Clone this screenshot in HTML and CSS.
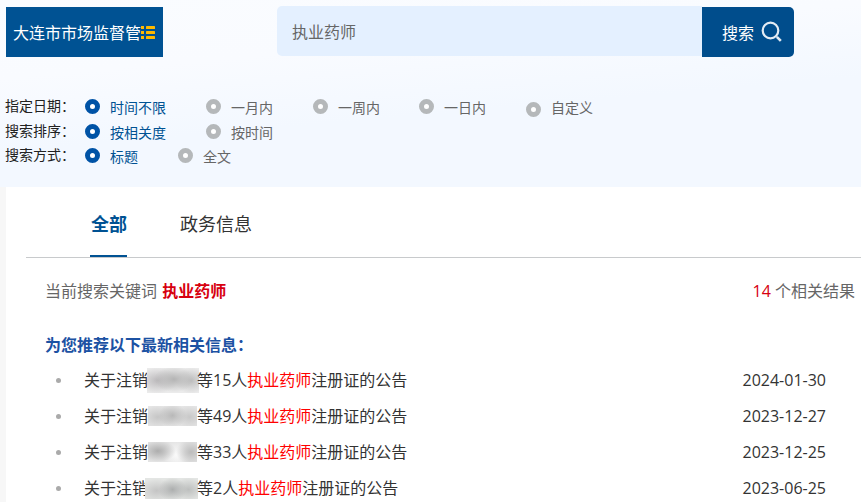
FILE: index.html
```html
<!DOCTYPE html>
<html lang="zh-CN">
<head>
    <meta charset="UTF-8" />
    <meta name="viewport" content="width=device-width, initial-scale=1.0" />
    <title>搜索</title>
    <link rel="stylesheet" href="styles.css">
</head>
<body>
    <div class="top">
        <div class="search-bar">
            <div class="site-select">
                <span>大连市市场监督管</span>
                <svg class="list-icon" width="14" height="13" viewBox="0 0 14 13" fill="#fdb900">
                    <path d="M0 0h3v3H0zM0 5h3v3H0zM0 10h3v3H0z" />
                    <rect x="5" y="0" width="9" height="3" rx=".6" />
                    <rect x="5" y="5" width="9" height="3" rx=".6" />
                    <rect x="5" y="10" width="9" height="3" rx=".6" />
                </svg>
            </div>
            <form class="search-form">
                <input type="text" class="search-input" value="执业药师" />
                <button type="button" class="search-btn">
                    <span>搜索</span>
                    <svg width="22" height="22" viewBox="0 0 22 22" fill="none" stroke="#e3ebf3">
                        <circle cx="9.5" cy="9.5" r="7.8" stroke-width="2.2" />
                        <path d="M15.8 15.8l4 4" stroke-width="2.6" />
                    </svg>
                </button>
            </form>
        </div>

        <!-- Filters -->
        <div class="filters">
            <div class="filter-row">
                <span class="filter-label">指定日期：</span>
                <a class="option on"><i class="radio"></i><span>时间不限</span></a>
                <a class="option"><i class="radio"></i><span>一月内</span></a>
                <a class="option"><i class="radio"></i><span>一周内</span></a>
                <a class="option day"><i class="radio"></i><span>一日内</span></a>
                <a class="option custom"><i class="radio"></i><span>自定义</span></a>
            </div>
            <div class="filter-row sort">
                <span class="filter-label">搜索排序：</span>
                <a class="option on"><i class="radio"></i><span>按相关度</span></a>
                <a class="option"><i class="radio"></i><span>按时间</span></a>
            </div>
            <div class="filter-row">
                <span class="filter-label">搜索方式：</span>
                <a class="option on"><i class="radio"></i><span>标题</span></a>
                <a class="option"><i class="radio"></i><span>全文</span></a>
            </div>
        </div>
    </div>

    <!-- Results -->
    <div class="content">
        <div class="tabs">
            <a class="tab active">全部</a>
            <a class="tab">政务信息</a>
        </div>
        <div class="summary">
            <div>当前搜索关键词 <b>执业药师</b></div>
            <div><em>14</em> 个相关结果</div>
        </div>
        <h3 class="recommend">为您推荐以下最新相关信息：</h3>
        <ul class="list">
            <li><a>关于注销<i class="mask mask-a"></i>等15人<em>执业药师</em>注册证的公告</a><span class="date">2024-01-30</span></li>
            <li><a>关于注销<i class="mask mask-b"></i>等49人<em>执业药师</em>注册证的公告</a><span class="date">2023-12-27</span></li>
            <li><a>关于注销<i class="mask mask-c"></i>等33人<em>执业药师</em>注册证的公告</a><span class="date">2023-12-25</span></li>
            <li><a>关于注销<i class="mask mask-d"></i>等2人<em>执业药师</em>注册证的公告</a><span class="date">2023-06-25</span></li>
        </ul>
    </div>
</body>
</html>
```
FILE: styles.css
```css
:root {
    --blue: #005293;
    --blue-dark: #004d8c;
    --radio: #0053a6;
    --grey: #666;
    --text: #333;
}

* {
    box-sizing: border-box;
}

body {
    margin: 0;
    height: 502px;
    overflow: hidden;
    font-family: "Open Sans", "Noto Sans CJK SC", sans-serif;
    font-size: 16px;
    color: var(--text);
    background-color: #f7f7f7;
}

i,
em {
    font-style: normal;
}

.top {
    height: 187px;
    padding: 6px 0 0 6px;
    background: linear-gradient(175deg, #fafcff 0%, #f9fbff 30%, #f3f8ff 58%, #f3f8ff 100%);
}

.search-bar {
    display: flex;
    height: 51px;
}

.site-select {
    display: flex;
    align-items: center;
    width: 157px;
    height: 50px;
    margin-top: 1px;
    padding-left: 7px;
    color: #fff;
    background-color: var(--blue);
    white-space: nowrap;
}

.list-icon {
    flex: none;
    margin-top: 1px;
}

.search-form {
    display: flex;
    margin: 0 0 0 114px;
}

.search-input {
    width: 425px;
    height: 50px;
    padding: 0 15px;
    border: none;
    border-radius: 5px 0 0 5px;
    outline: none;
    font: inherit;
    color: var(--grey);
    background-color: #e4f0ff;
}

.search-btn {
    display: flex;
    align-items: center;
    gap: 7px;
    width: 92px;
    height: 50px;
    margin-top: 1px;
    padding: 0 0 0 20px;
    border: none;
    border-radius: 0 5px 5px 0;
    font: inherit;
    color: #fff;
    background-color: var(--blue-dark);
}

.filters {
    margin-top: 37px;
    font-size: 14px;
}

.filter-row {
    display: flex;
    align-items: center;
    height: 24.5px;
    line-height: 20px;
}

.filter-label {
    width: 80px;
    margin-left: -1px;
    color: #222;
    white-space: nowrap;
}

.option {
    display: flex;
    align-items: center;
    gap: 10px;
    margin-right: 40px;
    color: var(--grey);
}

.option span {
    padding-top: 3px;
    margin-bottom: -1px;
}

.option.on {
    color: var(--blue);
}

.option.day {
    margin-left: -1px;
}

.radio {
    width: 15px;
    height: 15px;
    border: 5px solid #b5b8ba;
    border-radius: 50%;
    background-color: #fff;
}

.on .radio {
    border-color: var(--radio);
}

.sort .radio {
    margin-top: 1px;
}

.custom .radio {
    margin-top: 6px;
}

.content {
    height: 315px;
    margin-left: 6px;
    background-color: #fff;
}

.tabs {
    display: flex;
    gap: 53px;
    height: 71px;
    margin-left: 20px;
    padding-left: 64px;
    border-bottom: 1px solid #c8cacc;
    font-size: 18px;
    line-height: 74px;
}

.tab {
    height: 70px;
}

.tab.active {
    width: 37px;
    padding-left: 1px;
    border-bottom: 2px solid var(--blue);
    font-weight: bold;
    color: var(--blue);
    white-space: nowrap;
}

.summary {
    display: flex;
    justify-content: space-between;
    padding: 20px 6px 0 39px;
    line-height: 26px;
    color: var(--grey);
}

.summary b {
    margin-left: 1px;
    color: #d7000f;
}

.summary em {
    color: #d7000f;
}

.recommend {
    margin: 28px 0 4px 39px;
    font-size: 16px;
    line-height: 26px;
    color: #1c52a3;
}

.list {
    margin: 0;
    padding: 0 35px 0 50px;
    list-style: none;
}

.list li {
    display: flex;
    align-items: center;
    height: 36px;
    line-height: 36px;
}

.list li::before {
    content: "";
    width: 5px;
    height: 5px;
    margin-right: 23px;
    border-radius: 50%;
    background-color: #aaa;
}

.list a {
    display: flex;
    align-items: center;
}

.list em {
    color: #f00;
}

.date {
    margin-left: auto;
}

/* blurred-out names */
.mask {
    width: 49px;
    height: 20px;
    background:
        radial-gradient(ellipse 14px 12px at 50% 48%, #b8b8b8, transparent),
        radial-gradient(ellipse 18px 12px at 20% 55%, #c6c6c6, transparent),
        radial-gradient(ellipse 16px 12px at 85% 55%, #c8c8c8, transparent),
        #e6e6e6;
}

.mask-a {
    width: 52px;
    height: 25px;
    margin: 0 -2px 0 -1px;
    background:
        radial-gradient(ellipse 20px 13px at 52% 45%, #b4b4b4, transparent),
        radial-gradient(ellipse 20px 13px at 20% 50%, #bcbabc, transparent),
        radial-gradient(ellipse 16px 13px at 85% 50%, #bebebe, transparent),
        #ebebeb;
}

.mask-c {
    background:
        radial-gradient(ellipse 18px 11px at 20% 45%, #adadad, transparent),
        radial-gradient(ellipse 15px 13px at 88% 50%, #bcbcbc, transparent),
        radial-gradient(ellipse 14px 14px at 58% 65%, #fafafa, transparent),
        #e4e4e4;
}

.mask-d {
    width: 53px;
    height: 21px;
    margin: 0 -1px 0 -3px;
    background:
        radial-gradient(ellipse 14px 12px at 52% 55%, #acaeae, transparent),
        radial-gradient(ellipse 18px 12px at 22% 60%, #c4c4c4, transparent),
        radial-gradient(ellipse 16px 12px at 82% 55%, #bdbfbe, transparent),
        #e4e6e4;
}
```
